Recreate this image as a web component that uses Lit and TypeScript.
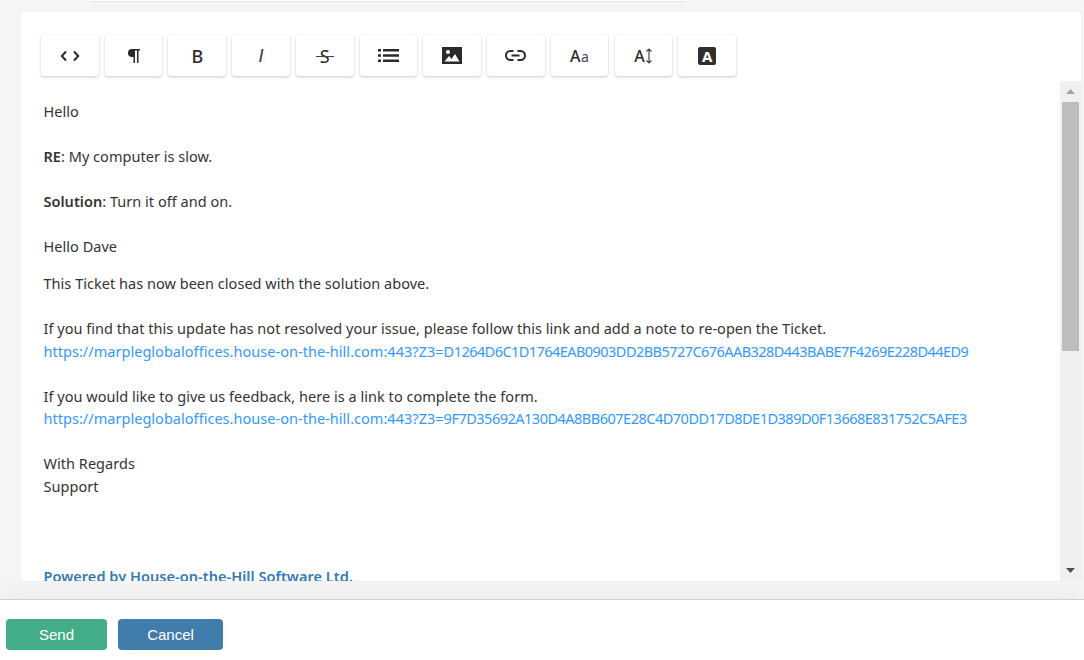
import { LitElement, html, css } from "lit";
import { customElement } from "lit/decorators.js";

const host = "https://marpleglobaloffices.house-on-the-hill.com:443?Z3=";
const hash1 = "D1264D6C1D1764EAB0903DD2BB5727C676AAB328D443BABE7F4269E228D44ED9";
const hash2 = "9F7D35692A130D4A8BB607E28C4D70DD17D8DE1D389D0F13668E831752C5AFE3";

@customElement("app-root")
export class AppRoot extends LitElement {
  static styles = css`
    :host { display: flex; flex-direction: column; width: 1084px; height: 660px; overflow: hidden; background: #f5f5f5; font-family: "Noto Sans", sans-serif; color: #333; }
    .top { height: 12px; flex: none; padding-left: 90px; }
    .stub { width: 596px; height: 1px; background: #fff; box-shadow: 0 1px 1px #e2e2e2; }
    .card { flex: none; margin-left: 21px; width: 1060px; height: 569px; background: #fff; border-radius: 3px; box-shadow: 0 0 1px #d8d8d8; display: flex; flex-direction: column; overflow: hidden; }
    .toolbar { flex: none; height: 69px; box-sizing: border-box; padding: 23px 0 0 20px; display: flex; gap: 6.15px; }
    .tb { width: 57.6px; height: 41px; background: #fff; border-radius: 3px; box-shadow: 0 1px 3px rgba(0,0,0,.22); display: flex; align-items: center; justify-content: center; color: #2a2a2a; }
    .tb svg { display: block; }
    .body { flex: 1; min-height: 0; display: flex; }
    .content { flex: 1; min-width: 0; overflow: hidden; padding: 19px 0 0 22.5px; font-size: 14.5px; line-height: 22.5px; letter-spacing: .03px; }
    .content p { margin: 0; }
    .content b { font-weight: 600; }
    .content .gap { height: 22.5px; }
    .content .sp { height: 14.5px; }
    .content a { color: #3399ff; text-decoration: none; }
    .content a .h1 { letter-spacing: -.55px; }
    .content a .h2 { letter-spacing: -.5px; }
    .content .pw { color: #337ab7; font-weight: 600; letter-spacing: .05px; }
    .sb { flex: none; width: 21px; background: #f0f0f0; display: flex; flex-direction: column; align-items: center; }
    .arr { flex: none; height: 21px; width: 100%; display: flex; align-items: center; justify-content: center; }
    .thumb { flex: none; width: 17px; height: 249px; background: #bdbdbd; }
    .space { flex: 1; }
    .footer { flex: none; position: relative; margin-top: 18px; height: 61px; box-sizing: border-box; border-top: 1px solid #d2d2d2; background: #fff; padding: 19px 0 0 6px; display: flex; gap: 11px; align-items: flex-start; box-shadow: 0 -3px 24px rgba(0,0,0,.05); }
    .btn { height: 31px; border-radius: 4px; color: #fff; font: 15px "Liberation Sans", sans-serif; display: flex; align-items: center; justify-content: center; }
    .send { width: 101px; background: #42ad87; }
    .cancel { width: 105px; background: #417dab; }
    .b { font: 500 18px/1 "Noto Sans", sans-serif; }
    .i { font: italic 400 18px/1 "Liberation Sans", sans-serif; color: #333; }
    .s { position: relative; font: 400 18px/1 "Noto Sans", sans-serif; }
    .s::after { content: ""; position: absolute; left: -4px; right: -4px; top: 50%; height: 1px; background: #444; }
    .aa { font: 500 16px/1 "Noto Sans", sans-serif; letter-spacing: .5px; }
    .aa small { font-size: 14px; font-weight: 400; color: #444; }
    .a2 { font: 500 16px/1 "Noto Sans", sans-serif; display: flex; align-items: center; gap: 0; }
    .box { width: 18px; height: 18px; background: #2f2f2f; border-radius: 2px; color: #fff; font: 700 15px/18px "Noto Sans", sans-serif; text-align: center; }
  `;

  private link(hash: string, cls: string) {
    return html`<p><a>${host}<span class=${cls}>${hash}</span></a></p>`;
  }

  render() {
    return html`
      <div class="top"><div class="stub"></div></div>
      <div class="card">
        <div class="toolbar">
          <div class="tb"><svg width="20" height="12" viewBox="0 0 20 12" fill="none" stroke="#2a2a2a" stroke-width="2"><path d="M6 1.5 1.8 6 6 10.5M14 1.5 18.2 6 14 10.5"/></svg></div>
          <div class="tb"><svg width="13" height="14" viewBox="0 0 13 14" fill="#2a2a2a"><path d="M5 0h8v1.5h-1.5V14H10V1.5H8V14H6.5V8H5A4 4 0 0 1 5 0z"/></svg></div>
          <div class="tb"><span class="b">B</span></div>
          <div class="tb"><span class="i">I</span></div>
          <div class="tb"><span class="s">S</span></div>
          <div class="tb"><svg width="21" height="13" viewBox="0 0 21 13" fill="#2a2a2a"><path d="M0 0h3v2.4H0zM5 0h16v2.4H5zM0 5.3h3v2.4H0zM5 5.3h16v2.4H5zM0 10.6h3V13H0zM5 10.6h16V13H5z"/></svg></div>
          <div class="tb"><svg width="20" height="17" viewBox="0 0 20 17"><path fill="#2a2a2a" d="M0 0h20v17H0z"/><circle cx="6" cy="5" r="2" fill="#fff"/><path fill="#fff" d="M2.5 14.5 7 9l2.5 3L13 7l4.5 7.5z"/></svg></div>
          <div class="tb"><svg width="21" height="11" viewBox="0 0 21 11" fill="none" stroke="#2a2a2a" stroke-width="2"><path d="M8.5 1H5.5a4.5 4.5 0 0 0 0 9h3M12.5 1h3a4.5 4.5 0 0 1 0 9h-3M6.5 5.5h8"/></svg></div>
          <div class="tb"><span class="aa">A<small>a</small></span></div>
          <div class="tb"><span class="a2">A<svg width="8" height="16" viewBox="0 0 8 16" fill="none" stroke="#444" stroke-width="1.2"><path d="M4 1v14M1.5 3.5 4 1l2.5 2.5M1.5 12.5 4 15l2.5-2.5"/></svg></span></div>
          <div class="tb"><div class="box">A</div></div>
        </div>
        <div class="body">
          <div class="content">
            <p>Hello</p>
            <div class="gap"></div>
            <p><b>RE</b>: My computer is slow.</p>
            <div class="gap"></div>
            <p><b>Solution</b>: Turn it off and on.</p>
            <div class="gap"></div>
            <p>Hello Dave</p>
            <div class="sp"></div>
            <p>This Ticket has now been closed with the solution above.</p>
            <div class="gap"></div>
            <p>If you find that this update has not resolved your issue, please follow this link and add a note to re-open the Ticket.</p>
            ${this.link(hash1, "h1")}
            <div class="gap"></div>
            <p>If you would like to give us feedback, here is a link to complete the form.</p>
            ${this.link(hash2, "h2")}
            <div class="gap"></div>
            <p>With Regards</p>
            <p>Support</p>
            <div class="gap"></div>
            <div class="gap"></div>
            <div class="gap"></div>
            <p class="pw">Powered by House-on-the-Hill Software Ltd.</p>
          </div>
          <div class="sb">
            <div class="arr"><svg width="9" height="5" viewBox="0 0 9 5" fill="#a3a3a3"><path d="M4.5 0 9 5H0z"/></svg></div>
            <div class="thumb"></div>
            <div class="space"></div>
            <div class="arr"><svg width="9" height="5" viewBox="0 0 9 5" fill="#505050"><path d="M0 0h9L4.5 5z"/></svg></div>
          </div>
        </div>
      </div>
      <div class="footer">
        <div class="btn send">Send</div>
        <div class="btn cancel">Cancel</div>
      </div>
    `;
  }
}
